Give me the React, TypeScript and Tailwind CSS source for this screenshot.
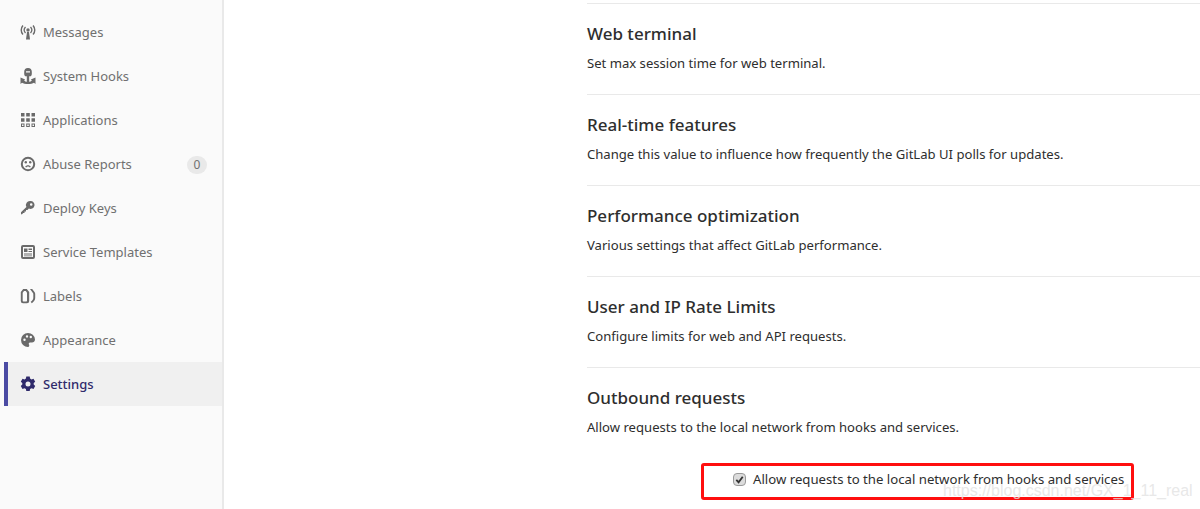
import type { ReactNode } from 'react';

const ic = 'w-4 h-4 fill-[#6a6a6a] shrink-0';

const icons: Record<string, ReactNode> = {
  messages: (
    <svg viewBox="0 0 16 16" className={ic}>
      <circle cx="8" cy="6" r="1.7" />
      <path d="M7 8h2l1 7.500H6z" />
      <path d="M5 2.600a5 5 0 0 0 0 6.800l1-.9a3.600 3.600 0 0 1 0-5zM11 2.600a5 5 0 0 1 0 6.800l-1-.9a3.600 3.600 0 0 0 0-5z" />
      <path d="M2.400 1a7.600 7.600 0 0 0 0 10l1.100-.9a6.200 6.200 0 0 1 0-8.200zM13.600 1a7.600 7.600 0 0 1 0 10l-1.100-.9a6.200 6.200 0 0 0 0-8.200z" />
    </svg>
  ),
  hooks: (
    <svg viewBox="0 0 16 16" className={ic}>
      <path d="M8 0a3.800 3.800 0 0 1 3.800 3.800V6a3 3 0 0 1-1 2.300H5.200A3 3 0 0 1 4.200 6V3.800A3.800 3.800 0 0 1 8 0zM6 3.200v1.300h4V3.200z" fillRule="evenodd" />
      <path d="M6.800 8h2.400v5.800c1.300-.1 2.200-.7 2.700-1.600l-1.100-.7L15.500 9.500V16l-1.500-1.200C12.800 15.700 10.500 16 8 16s-4.800-.3-6-1.200L.5 16V9.500l4.700 2-1.100.7c.5.900 1.400 1.500 2.700 1.600z" />
    </svg>
  ),
  apps: (
    <svg viewBox="0 0 16 16" className={ic}>
      <path d="M1 1h3.500v3.500H1zM6.200 1h3.600v3.500H6.200zM11.500 1H15v3.500h-3.500zM1 6.200h3.500v3.600H1zM6.200 6.200h3.600v3.600H6.200zM11.500 6.200H15v3.600h-3.500z" />
      <path d="M1 11.500h3.500V15H1zm1 1V14h1.500v-1.500zM6.200 11.500h3.600V15H6.200zm1 1V14h1.600v-1.500zM11.500 11.500H15V15h-3.500zm1 1V14H14v-1.500z" fillRule="evenodd" />
    </svg>
  ),
  abuse: (
    <svg viewBox="0 0 16 16" className={ic}>
      <path d="M8 .8a7.200 7.200 0 1 1 0 14.400A7.200 7.200 0 0 1 8 .8zm0 2a5.200 5.200 0 1 0 0 10.400A5.200 5.200 0 0 0 8 2.800z" fillRule="evenodd" />
      <circle cx="5.800" cy="6.300" r="1.200" />
      <circle cx="10.200" cy="6.300" r="1.200" />
      <path d="M5.200 10.800c.7-1 1.600-1.500 2.800-1.500s2.100.5 2.800 1.500l-1 .6c-.5-.6-1-1-1.800-1s-1.300.4-1.800 1z" />
    </svg>
  ),
  key: (
    <svg viewBox="0 0 16 16" className={ic}>
      <path d="M10.500 1a4 4 0 1 1-1.700 7.600L7.500 10H6v1.500H4.500V13H3.200l-1.400 1.600-.8-.7v-1.600l5.400-5.400A4 4 0 0 1 10.500 1zm.7 2.200a1.300 1.300 0 1 0 0 2.600 1.300 1.300 0 0 0 0-2.600z" fillRule="evenodd" />
    </svg>
  ),
  template: (
    <svg viewBox="0 0 16 16" className={ic}>
      <path d="M3 1h10a2 2 0 0 1 2 2v10a2 2 0 0 1-2 2H3a2 2 0 0 1-2-2V3a2 2 0 0 1 2-2zm0 2v10h10V3zM4 4.500h3.500V8H4zM8.500 4.500H12V6H8.500zM8.500 7H12v1H8.500zM4 9.500h8v1H4zM4 11.500h8v.8H4z" fillRule="evenodd" />
    </svg>
  ),
  labels: (
    <svg viewBox="0 0 16 16" className={ic}>
      <path d="M3.200 1h3.600l2.400 3v9a2.200 2.200 0 0 1-2.200 2.200H3A2.200 2.200 0 0 1 .8 13V4zm.8 2L2.700 4.700v8c0 .4.300.7.700.7h2.900c.4 0 .7-.3.700-.7V4.700L5.800 3z" fillRule="evenodd" />
      <path d="M10 1h2.200l2.300 3c.5.700.7 1.300.7 2v4c0 2-1.300 3.800-3.400 5.300l-1.100-1.500c1.500-1.100 2.600-2.400 2.600-3.800V6c0-.4-.1-.7-.4-1z" />
    </svg>
  ),
  appearance: (
    <svg viewBox="0 0 16 16" className={ic}>
      <path d="M8 1a7 7 0 0 1 7 6.500c0 2-1.500 3-3 3H10a1.300 1.300 0 0 0-1 2.100c.5.700.3 2.400-1 2.400A7 7 0 0 1 8 1zM4.500 6.500a1.200 1.200 0 1 0 0 2.400 1.200 1.200 0 0 0 0-2.400zM7 3.200a1.200 1.200 0 1 0 0 2.400 1.200 1.200 0 0 0 0-2.400zm3.800.6a1.200 1.200 0 1 0 0 2.400 1.200 1.200 0 0 0 0-2.400z" fillRule="evenodd" />
    </svg>
  ),
  settings: (
    <svg viewBox="0 0 16 16" className="w-4 h-4 fill-[#2f2a6b] shrink-0">
      <path d="M6.300.6h3.400l.4 2 1.400.8 2-.7 1.700 3-1.500 1.300v1.600l1.500 1.300-1.700 3-2-.7-1.400.8-.4 2H6.300l-.4-2-1.400-.8-2 .7-1.700-3L2.300 8.600V7L.8 5.700l1.700-3 2 .7 1.400-.8zM8 5.500a2.500 2.500 0 1 0 0 5 2.500 2.500 0 0 0 0-5z" fillRule="evenodd" />
    </svg>
  ),
};

const navItems = [
  { key: 'messages', label: 'Messages' },
  { key: 'hooks', label: 'System Hooks' },
  { key: 'apps', label: 'Applications' },
  { key: 'abuse', label: 'Abuse Reports', badge: '0' },
  { key: 'key', label: 'Deploy Keys' },
  { key: 'template', label: 'Service Templates' },
  { key: 'labels', label: 'Labels' },
  { key: 'appearance', label: 'Appearance' },
  { key: 'settings', label: 'Settings', active: true },
];

const sections = [
  { title: 'Web terminal', text: 'Set max session time for web terminal.' },
  { title: 'Real-time features', text: 'Change this value to influence how frequently the GitLab UI polls for updates.' },
  { title: 'Performance optimization', text: 'Various settings that affect GitLab performance.' },
  { title: 'User and IP Rate Limits', text: 'Configure limits for web and API requests.' },
  { title: 'Outbound requests', text: 'Allow requests to the local network from hooks and services.' },
];

export default function App() {
  return (
    <div className="relative flex h-[509px] w-[1200px] overflow-hidden bg-white font-['Noto_Sans',sans-serif]">
      {/* Sidebar */}
      <aside className="h-full w-[224px] shrink-0 border-r-2 border-[#e9e9e9] bg-[#fafafa] pt-[10px] pl-1">
        {navItems.map((item) => (
          <div
            key={item.key}
            className={`flex h-11 items-center text-[13px] ${
              item.active
                ? 'border-l-4 border-[#4b4ba3] bg-[#f0f0f0] pl-3 pt-px font-medium text-[#2f2a6b]'
                : 'pl-4 pt-[2px] text-[#707070]'
            }`}
          >
            <span className="-mt-[2px]">{icons[item.key]}</span>
            <span className="ml-[7px]">{item.label}</span>
            {item.badge && (
              <span className="ml-auto mr-[15px] flex h-[18px] w-5 items-center justify-center rounded-full bg-[#e9e9e9] text-xs text-[#707070]">
                {item.badge}
              </span>
            )}
          </div>
        ))}
      </aside>

      {/* Settings sections */}
      <main className="flex-1 pl-[363px] pt-[3px]">
        {sections.map((s) => (
          <section key={s.title} className="h-[91px] border-t border-[#e9e9e9] pt-[17px]">
            <h4 className="text-[17px] leading-[26px] font-medium text-[#2e2e2e]">{s.title}</h4>
            <p className="mt-[6px] text-[13.1px] leading-5 text-[#2e2e2e]">{s.text}</p>
          </section>
        ))}
        <div className="mt-[11px] flex items-center pl-[146px]">
          <span className="flex h-[13px] w-[13px] items-center justify-center rounded-sm border border-[#9a9a9a] bg-[#dcdcdc]">
            <svg viewBox="0 0 12 12" className="h-[11px] w-[11px] fill-none stroke-[#333] stroke-2">
              <path d="M2.500 6.500l2.500 2.500 4.500-6" />
            </svg>
          </span>
          <span className="ml-[7px] text-[13.2px] leading-5 text-[#2e2e2e]">
            Allow requests to the local network from hooks and services
          </span>
        </div>
      </main>

      {/* Annotation drawn over the screenshot */}
      <div className="absolute left-[701px] top-[463px] h-[37px] w-[433px] rounded-[3px] border-[3px] border-[#ff0f0f]" />
      <span className="absolute left-[943px] top-[481px] font-['Liberation_Sans',sans-serif] text-[16px] leading-[20px] text-[#e2e2e2]/80">
        https://blog.csdn.net/GX_1_11_real
      </span>
    </div>
  );
}
